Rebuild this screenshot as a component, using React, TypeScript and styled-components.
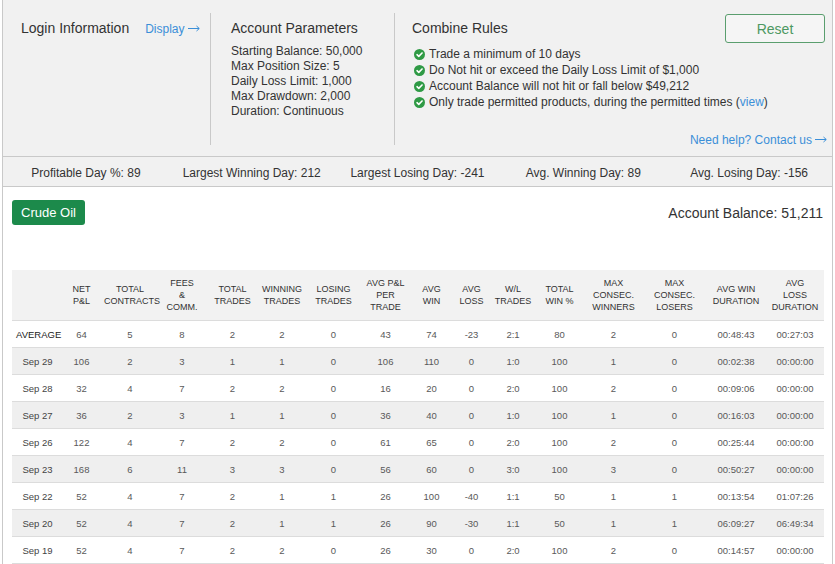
import React from 'react';
import styled, { createGlobalStyle } from 'styled-components';

const GlobalStyle = createGlobalStyle`
  html, body { margin: 0; padding: 0; background: #fff; }
  body { font-family: "Liberation Sans", Arial, sans-serif; color: #333; }
`;

const Page = styled.div`
  margin-left: 2px;
  width: 831px;
  min-height: 564px;
  box-sizing: border-box;
  border-left: 1px solid #c9c9c9;
  border-right: 1px solid #c9c9c9;
`;

const Header = styled.header`
  display: flex;
  height: 157px;
  box-sizing: border-box;
  padding: 13px 0 11px;
  background: #f1f1f1;
  border-bottom: 1px solid #c9c9c9;
`;

const Section = styled.section<{ $width?: number; $pl: number; $divider?: boolean }>`
  display: flex;
  flex-direction: column;
  box-sizing: border-box;
  height: 132px;
  ${(p) => (p.$width ? `width: ${p.$width}px; flex: none;` : 'flex: 1; min-width: 0;')}
  padding-left: ${(p) => p.$pl}px;
  padding-right: 5px;
  border-left: ${(p) => (p.$divider ? '1px solid #c9c9c9' : 'none')};
`;

const TitleRow = styled.div`
  display: flex;
  align-items: baseline;
  gap: 16px;
`;

const Title = styled.div`
  font-size: 14px;
  line-height: 17px;
  padding-top: 7px;
  color: #333;
`;

const Link = styled.a`
  font-size: 12px;
  color: #3b8fd8;
  text-decoration: none;
  cursor: pointer;
  white-space: nowrap;
`;

const Arrow = styled.svg`
  display: inline-block;
  width: 12px;
  height: 7px;
  margin-left: 3px;
  vertical-align: 1px;
`;

const ParamList = styled.div`
  margin-top: 7px;
  font-size: 12px;
  line-height: 15px;
  color: #333;
`;

const RulesHead = styled.div`
  display: flex;
  justify-content: space-between;
  align-items: flex-start;
`;

const RuleList = styled.ul`
  list-style: none;
  margin: 3px 0 0;
  padding: 0;
  font-size: 12px;
  line-height: 16px;
  color: #333;
`;

const RuleItem = styled.li`
  display: flex;
  align-items: center;
  gap: 4px;
  padding-left: 2px;
  white-space: nowrap;
`;

const ResetButton = styled.button`
  flex: none;
  width: 100px;
  height: 29px;
  margin: 1px 2px 0 0;
  box-sizing: border-box;
  border: 1px solid #5a9e6e;
  border-radius: 3px;
  background: #f5f5f5;
  color: #4d9862;
  font-family: inherit;
  font-size: 14px;
  cursor: pointer;
`;

const HelpLink = styled(Link)`
  margin-top: auto;
  margin-bottom: -1px;
  align-self: flex-end;
  line-height: 12px;
`;

const StatsBar = styled.div`
  display: flex;
  height: 30px;
  box-sizing: border-box;
  padding-top: 4px;
  background: #f1f1f1;
  border-bottom: 1px solid #c9c9c9;
`;

const Stat = styled.div`
  flex: 1;
  text-align: center;
  font-size: 12px;
  line-height: 25px;
  color: #333;
`;

const Content = styled.main`
  padding: 13px 8px 0 9px;
`;

const TopRow = styled.div`
  display: flex;
  justify-content: space-between;
  align-items: center;
`;

const ProductButton = styled.button`
  height: 25px;
  padding: 0 9px;
  border: none;
  border-radius: 3px;
  background: #1c8a4b;
  color: #fff;
  font-family: inherit;
  font-size: 13px;
  cursor: pointer;
`;

const Balance = styled.div`
  font-size: 14px;
  color: #333;
  padding-right: 1px;
`;

const Table = styled.table`
  margin-top: 45px;
  width: 100%;
  border-collapse: collapse;
  table-layout: fixed;
`;

const HeadCell = styled.th`
  height: 50px;
  padding: 0;
  background: #f2f2f2;
  font-size: 9px;
  line-height: 12px;
  font-weight: normal;
  color: #333;
  text-align: center;
  vertical-align: middle;
  white-space: nowrap;
`;

const Row = styled.tr<{ $striped: boolean }>`
  background: ${(p) => (p.$striped ? '#efefef' : '#fff')};
  border-top: 1px solid #dcdcdc;
  border-bottom: 1px solid #dcdcdc;
`;

const Cell = styled.td<{ $label?: boolean; $strong?: boolean }>`
  height: 26px;
  padding: 0 0 0 ${(p) => (p.$label ? '4px' : '0')};
  text-align: center;
  white-space: nowrap;
  font-size: 9.5px;
  color: ${(p) => (p.$strong ? '#222' : p.$label ? '#444' : '#595959')};
`;

const CheckIcon = () => (
  <svg width="11" height="11" viewBox="0 0 12 12" aria-hidden style={{ flex: 'none' }}>
    <circle cx="6" cy="6" r="6" fill="#2f9a45" />
    <path d="M3.3 6.2 L5.2 8 L8.8 4.3" fill="none" stroke="#fff" strokeWidth="1.7" strokeLinecap="round" strokeLinejoin="round" />
  </svg>
);

const RightArrow = () => (
  <Arrow viewBox="0 0 12 7" aria-hidden>
    <path d="M0 3.5 H11 M8.5 1 L11.3 3.5 L8.5 6" fill="none" stroke="currentColor" strokeWidth="1" />
  </Arrow>
);

const colWidths = [47, 45, 52, 52, 49, 50, 53, 51, 41, 39, 44, 49, 59, 63, 60, 58];

const headers: string[][] = [
  [],
  ['NET', 'P&L'],
  ['TOTAL', 'CONTRACTS'],
  ['FEES', '&', 'COMM.'],
  ['TOTAL', 'TRADES'],
  ['WINNING', 'TRADES'],
  ['LOSING', 'TRADES'],
  ['AVG P&L', 'PER', 'TRADE'],
  ['AVG', 'WIN'],
  ['AVG', 'LOSS'],
  ['W/L', 'TRADES'],
  ['TOTAL', 'WIN %'],
  ['MAX', 'CONSEC.', 'WINNERS'],
  ['MAX', 'CONSEC.', 'LOSERS'],
  ['AVG WIN', 'DURATION'],
  ['AVG', 'LOSS', 'DURATION'],
];

const rows: string[][] = [
  ['AVERAGE', '64', '5', '8', '2', '2', '0', '43', '74', '-23', '2:1', '80', '2', '0', '00:48:43', '00:27:03'],
  ['Sep 29', '106', '2', '3', '1', '1', '0', '106', '110', '0', '1:0', '100', '1', '0', '00:02:38', '00:00:00'],
  ['Sep 28', '32', '4', '7', '2', '2', '0', '16', '20', '0', '2:0', '100', '2', '0', '00:09:06', '00:00:00'],
  ['Sep 27', '36', '2', '3', '1', '1', '0', '36', '40', '0', '1:0', '100', '1', '0', '00:16:03', '00:00:00'],
  ['Sep 26', '122', '4', '7', '2', '2', '0', '61', '65', '0', '2:0', '100', '2', '0', '00:25:44', '00:00:00'],
  ['Sep 23', '168', '6', '11', '3', '3', '0', '56', '60', '0', '3:0', '100', '3', '0', '00:50:27', '00:00:00'],
  ['Sep 22', '52', '4', '7', '2', '1', '1', '26', '100', '-40', '1:1', '50', '1', '1', '00:13:54', '01:07:26'],
  ['Sep 20', '52', '4', '7', '2', '1', '1', '26', '90', '-30', '1:1', '50', '1', '1', '06:09:27', '06:49:34'],
  ['Sep 19', '52', '4', '7', '2', '2', '0', '26', '30', '0', '2:0', '100', '2', '0', '00:14:57', '00:00:00'],
];

const params = [
  'Starting Balance: 50,000',
  'Max Position Size: 5',
  'Daily Loss Limit: 1,000',
  'Max Drawdown: 2,000',
  'Duration: Continuous',
];

const stats = [
  'Profitable Day %: 89',
  'Largest Winning Day: 212',
  'Largest Losing Day: -241',
  'Avg. Winning Day: 89',
  'Avg. Losing Day: -156',
];

export default function App() {
  return (
    <>
      <GlobalStyle />
      <Page>
        <Header>
          <Section $width={207} $pl={18}>
            <TitleRow>
              <Title>Login Information</Title>
              <Link>
                Display
                <RightArrow />
              </Link>
            </TitleRow>
          </Section>
          <Section $width={184} $pl={20} $divider>
            <Title>Account Parameters</Title>
            <ParamList>
              {params.map((p) => (
                <div key={p}>{p}</div>
              ))}
            </ParamList>
          </Section>
          <Section $pl={17} $divider>
            <RulesHead>
              <Title>Combine Rules</Title>
              <ResetButton>Reset</ResetButton>
            </RulesHead>
            <RuleList>
              <RuleItem><CheckIcon />Trade a minimum of 10 days</RuleItem>
              <RuleItem><CheckIcon />Do Not hit or exceed the Daily Loss Limit of $1,000</RuleItem>
              <RuleItem><CheckIcon />Account Balance will not hit or fall below $49,212</RuleItem>
              <RuleItem>
                <CheckIcon />
                <span>
                  Only trade permitted products, during the permitted times (<Link>view</Link>)
                </span>
              </RuleItem>
            </RuleList>
            <HelpLink>
              Need help? Contact us
              <RightArrow />
            </HelpLink>
          </Section>
        </Header>
        <StatsBar>
          {stats.map((s) => (
            <Stat key={s}>{s}</Stat>
          ))}
        </StatsBar>
        <Content>
          <TopRow>
            <ProductButton>Crude Oil</ProductButton>
            <Balance>Account Balance: 51,211</Balance>
          </TopRow>
          <Table>
            <colgroup>
              {colWidths.map((w, i) => (
                <col key={i} style={{ width: w }} />
              ))}
            </colgroup>
            <thead>
              <tr>
                {headers.map((lines, i) => (
                  <HeadCell key={i}>
                    {lines.map((l, j) => (
                      <div key={j}>{l}</div>
                    ))}
                  </HeadCell>
                ))}
              </tr>
            </thead>
            <tbody>
              {rows.map((r, ri) => (
                <Row key={r[0]} $striped={ri % 2 === 1}>
                  {r.map((v, ci) => (
                    <Cell key={ci} $label={ci === 0} $strong={ri === 0 && ci === 0}>
                      {v}
                    </Cell>
                  ))}
                </Row>
              ))}
            </tbody>
          </Table>
        </Content>
      </Page>
    </>
  );
}
